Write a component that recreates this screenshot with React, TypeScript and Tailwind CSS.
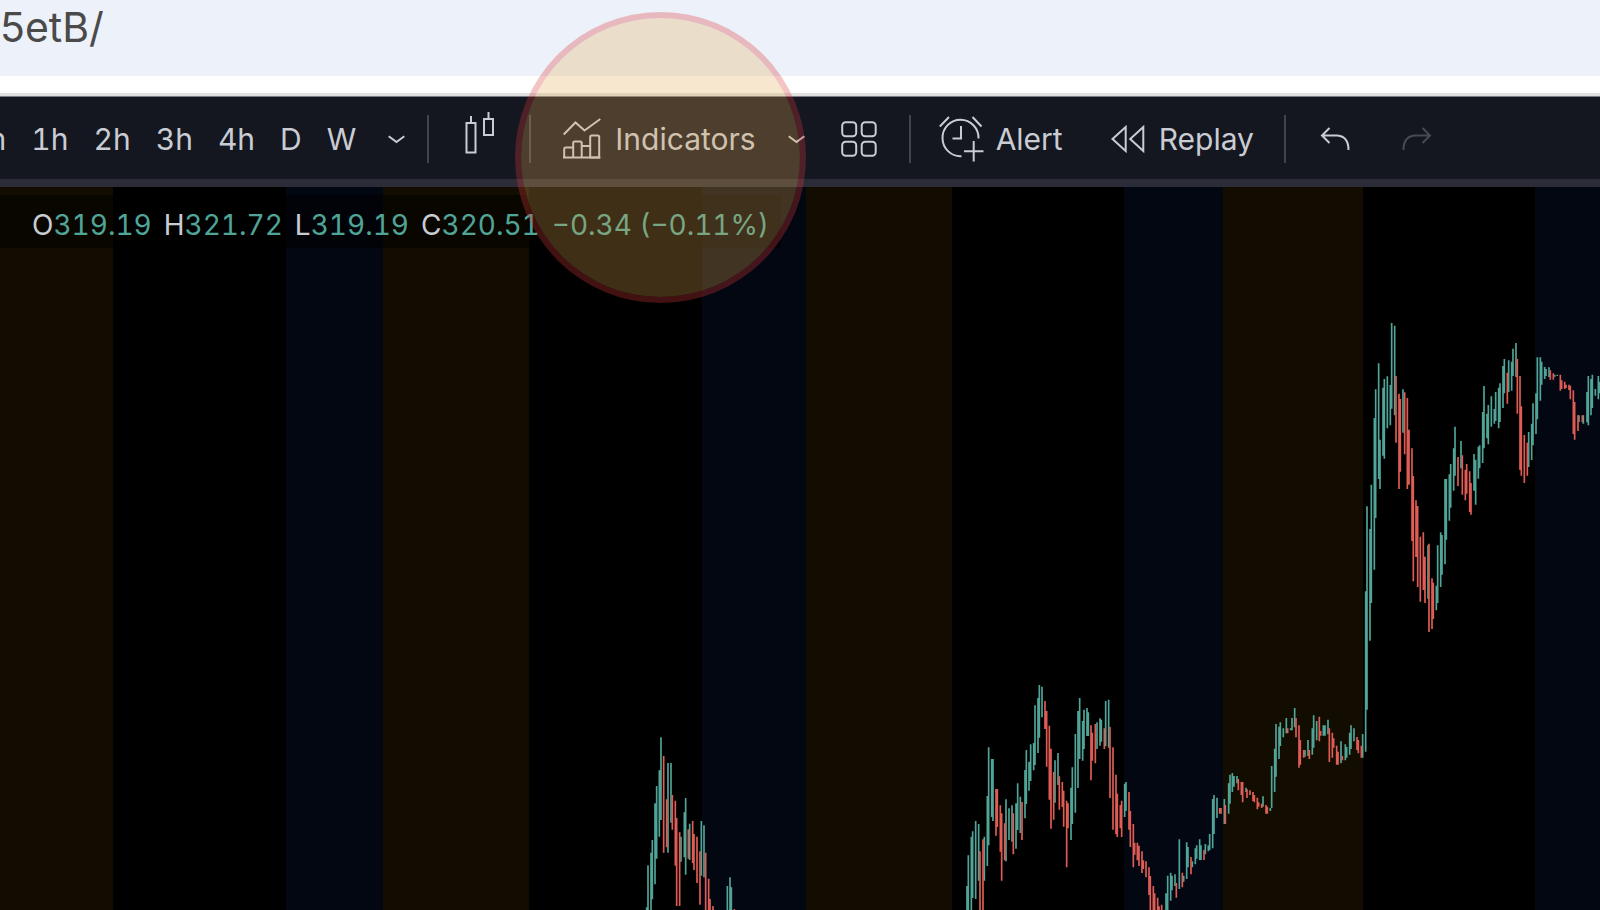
import type { ReactNode } from 'react';

type Stick = [x: number, top: number, bottom: number];

interface Segment {
	x: number;
	y: number;
	up: Stick[];
	down: Stick[];
}

const intervals = ['1h', '2h', '3h', '4h', 'D', 'W'];

const quote = [
	{ label: 'O', value: '319.19' },
	{ label: 'H', value: '321.72' },
	{ label: 'L', value: '319.19' },
	{ label: 'C', value: '320.51' },
];

// Trading sessions behind the candles
const sessions = [
	{ x: 0, width: 113, color: '#130c00' },
	{ x: 286, width: 97, color: '#030711' },
	{ x: 383, width: 146, color: '#130c00' },
	{ x: 702, width: 104, color: '#030711' },
	{ x: 806, width: 146, color: '#130c00' },
	{ x: 1124, width: 99, color: '#030711' },
	{ x: 1223, width: 140, color: '#130c00' },
	{ x: 1535, width: 65, color: '#030711' },
];

// Sticks are in thirds of a pixel, relative to the segment's origin
const segments: Segment[] = [
	{
		x: 630,
		y: 533,
		up: [[50, 562, 575], [54, 436, 575], [63, 398, 575], [67, 360, 538], [75, 250, 493], [80, 198, 416], [88, 151, 350], [93, 52, 300], [114, 129, 398], [123, 129, 308], [153, 350, 425], [163, 277, 412], [167, 234, 464], [179, 311, 420], [214, 303, 467], [222, 316, 472], [292, 498, 575], [300, 472, 575], [304, 502, 575]],
		down: [[101, 108, 398], [110, 238, 382], [127, 225, 329], [136, 242, 437], [140, 294, 558], [149, 337, 558], [175, 328, 416], [188, 303, 429], [192, 342, 450], [201, 350, 489], [210, 394, 554], [227, 398, 575], [236, 476, 575], [240, 537, 575], [249, 558, 575], [313, 567, 575]],
	},
	{
		x: 950,
		y: 483,
		up: [[51, 648, 725], [55, 556, 725], [64, 500, 725], [68, 484, 684], [77, 453, 687], [86, 462, 632], [103, 500, 632], [112, 378, 588], [116, 232, 526], [125, 267, 441], [129, 267, 453], [168, 388, 574], [177, 415, 510], [186, 406, 515], [198, 400, 536], [203, 340, 480], [211, 380, 489], [225, 300, 445], [229, 240, 402], [237, 275, 362], [242, 223, 333], [251, 219, 301], [255, 106, 285], [264, 84, 249], [268, 45, 203], [276, 50, 142], [315, 271, 398], [324, 249, 345]],
		down: [[90, 544, 725], [99, 508, 725], [138, 357, 497], [142, 357, 471], [151, 406, 545], [155, 430, 632], [164, 460, 571], [190, 430, 553], [216, 396, 510], [285, 93, 177], [290, 123, 290], [298, 167, 389], [303, 236, 476], [311, 306, 449], [328, 319, 419]],
	},
	{
		x: 1060,
		y: 493,
		up: [[33, 323, 480], [37, 262, 432], [46, 162, 398], [54, 93, 324], [59, 54, 237], [68, 123, 242], [72, 89, 207], [81, 84, 168], [85, 97, 168], [111, 127, 207], [120, 115, 197], [124, 119, 185], [137, 63, 199], [146, 59, 203], [194, 311, 411], [198, 306, 393]],
		down: [[7, 306, 381], [11, 332, 440], [20, 362, 562], [24, 370, 445], [93, 136, 301], [97, 158, 242], [106, 132, 250], [133, 145, 207], [150, 141, 354], [159, 202, 449], [168, 284, 463], [172, 341, 471], [181, 375, 445], [185, 362, 471], [207, 336, 449], [211, 393, 501], [220, 432, 562], [224, 488, 524], [232, 488, 541], [237, 497, 558], [246, 514, 579], [250, 541, 567], [258, 544, 592], [267, 562, 645], [271, 588, 695], [280, 618, 695], [284, 640, 695], [293, 653, 695], [297, 679, 695]],
	},
	{
		x: 1160,
		y: 503,
		up: [[18, 610, 665], [23, 557, 665], [32, 548, 632], [36, 557, 601], [45, 553, 588], [58, 448, 597], [71, 557, 575], [80, 457, 567], [84, 471, 532], [97, 514, 532], [106, 475, 523], [110, 466, 506], [119, 448, 510], [123, 466, 510], [136, 462, 493], [145, 466, 484], [149, 432, 480], [158, 327, 475], [162, 315, 432], [171, 323, 384], [193, 327, 402], [206, 280, 371], [210, 254, 341], [217, 249, 306], [222, 258, 290], [231, 258, 280], [258, 293, 306], [309, 319, 350], [331, 354, 363], [335, 228, 354], [344, 176, 306], [348, 102, 260], [357, 110, 207], [361, 97, 168], [370, 115, 142], [379, 84, 130], [392, 115, 121], [396, 84, 121], [404, 54, 112], [435, 180, 200], [444, 150, 198], [457, 115, 194], [461, 76, 173], [470, 93, 151], [490, 106, 137], [495, 106, 137], [504, 89, 133], [543, 154, 220], [556, 163, 211], [560, 171, 203], [569, 128, 194], [573, 106, 177], [582, 115, 154], [608, 132, 203]],
		down: [[5, 644, 665], [49, 579, 623], [67, 548, 592], [93, 501, 553], [132, 480, 510], [179, 354, 371], [183, 354, 371], [196, 345, 402], [235, 267, 301], [244, 276, 315], [248, 276, 337], [261, 298, 324], [270, 301, 315], [279, 306, 333], [283, 315, 337], [292, 323, 358], [296, 337, 350], [305, 341, 354], [318, 345, 371], [322, 350, 371], [383, 115, 130], [408, 84, 142], [417, 106, 233], [421, 150, 224], [431, 180, 203], [448, 180, 207], [478, 80, 154], [482, 123, 137], [508, 115, 216], [517, 128, 203], [521, 145, 173], [530, 167, 224], [534, 185, 224], [547, 198, 211], [591, 141, 180], [595, 150, 190], [604, 167, 203]],
	},
	{
		x: 1350,
		y: 113,
		up: [[47, 874, 1355], [51, 619, 1229], [60, 687, 1022], [64, 554, 909], [73, 354, 809], [77, 268, 654], [86, 190, 537], [90, 419, 567], [99, 263, 467], [103, 237, 476], [112, 229, 385], [121, 255, 376], [125, 69, 326], [134, 77, 346], [159, 268, 398], [234, 736, 896], [259, 857, 931], [263, 736, 909], [272, 697, 861], [276, 705, 824], [285, 537, 793], [289, 537, 719]],
		down: [[138, 228, 428], [147, 281, 567], [151, 297, 515], [164, 277, 463], [172, 294, 567], [177, 389, 554], [186, 445, 723], [190, 528, 844], [198, 601, 771], [203, 618, 861], [211, 710, 905], [220, 697, 870], [225, 770, 909], [237, 731, 996], [246, 835, 987], [250, 848, 957]],
	},
	{
		x: 1420,
		y: 133,
		up: [[88, 463, 602], [92, 432, 563], [101, 385, 512], [105, 320, 467], [123, 363, 445], [162, 402, 512], [167, 419, 554], [175, 380, 476], [179, 376, 445], [188, 276, 429], [192, 198, 385], [201, 281, 355], [205, 255, 373], [214, 229, 320], [223, 267, 311], [227, 216, 303], [236, 203, 325], [240, 190, 306], [249, 138, 264], [253, 117, 220], [266, 121, 216], [275, 125, 212], [279, 86, 168], [288, 69, 171], [326, 336, 441], [335, 311, 420], [339, 250, 376], [348, 220, 342], [352, 112, 298], [361, 112, 242], [365, 125, 194], [374, 141, 177], [378, 147, 168], [387, 142, 171], [404, 164, 170], [412, 164, 168], [477, 286, 306], [490, 286, 311], [501, 216, 307], [505, 168, 316], [513, 177, 286], [517, 164, 264], [526, 207, 227], [535, 168, 238], [539, 185, 220]],
		down: [[114, 411, 498], [127, 406, 524], [136, 450, 541], [140, 432, 521], [149, 454, 576], [153, 489, 584], [262, 158, 251], [292, 117, 281], [300, 168, 450], [304, 259, 467], [313, 345, 489], [322, 368, 467], [391, 151, 179], [400, 160, 179], [421, 164, 212], [425, 181, 207], [434, 185, 207], [438, 194, 204], [447, 194, 210], [451, 197, 238], [460, 211, 342], [464, 246, 359], [474, 286, 333], [487, 286, 307]],
	},
];

const toPath = (sticks: Stick[]) =>
	sticks.map(([x, top, bottom]) => `M${x} ${top}V${bottom}`).join('');

const Chart = () => (
	<svg
		viewBox="0 0 1600 723"
		className="block w-full bg-black"
		role="img"
		aria-label="Price chart"
	>
		{sessions.map((session) => (
			<rect
				key={session.x}
				x={session.x}
				width={session.width}
				height="723"
				fill={session.color}
			/>
		))}
		{segments.map((segment) => (
			<g
				key={segment.x}
				transform={`translate(${segment.x} ${segment.y}) scale(${1 / 3})`}
				strokeWidth="5"
			>
				<path d={toPath(segment.up)} stroke="#50a598" />
				<path d={toPath(segment.down)} stroke="#e05d55" />
			</g>
		))}
	</svg>
);

const ChevronIcon = () => (
	<svg width="17" height="9" viewBox="0 0 17 9" fill="none" stroke="currentColor" strokeWidth="2">
		<path d="M.7 1.2 8.5 7l7.8-5.8" />
	</svg>
);

const CandlesIcon = () => (
	<svg width="30" height="42" viewBox="0 0 30 42" fill="none" stroke="currentColor" strokeWidth="2">
		<path d="M6 4v7M1.5 11h9v29.5h-9zM23.5 0v7M19 7h9v16h-9z" />
	</svg>
);

const IndicatorsIcon = () => (
	<svg width="38" height="42" viewBox="0 0 38 42" fill="none" stroke="currentColor" strokeWidth="2">
		<path d="M.7 16.5 12.5 4.5l9 8L37.3 1M1.2 39.5v-8.5q0-1.5 1.5-1.5h7.5v-4.5q0-1.5 1.5-1.5h5.5q1.5 0 1.5 1.5v14.5M10.2 29.5v10M18.7 28h8.5M27.2 39.5v-20.5q0-1.5 1.5-1.5h6q1.5 0 1.5 1.5v20.5z" />
		<path d="M0 39.5h37.3" />
	</svg>
);

const LayoutIcon = () => (
	<svg width="36" height="36" viewBox="0 0 36 36" fill="none" stroke="currentColor" strokeWidth="2">
		<rect x="1.2" y="1.2" width="14" height="14" rx="3.5" />
		<rect x="20.7" y="1.2" width="14" height="14" rx="3.5" />
		<rect x="1.2" y="20.7" width="14" height="14" rx="3.5" />
		<rect x="20.7" y="20.7" width="14" height="14" rx="3.5" />
	</svg>
);

const AlertIcon = () => (
	<svg width="45" height="46" viewBox="0 0 45 46" fill="none" stroke="currentColor" strokeWidth="2">
		<path d="M39.5 22.5A18 18.3 0 1 0 22.5 40.2M22 10v12.5h-8.5M.8 10.5 10 1M33.5 1l9 9.5M34.7 25v20.5M25 35.3h19.5" />
	</svg>
);

const ReplayIcon = () => (
	<svg width="34" height="28" viewBox="0 0 34 28" fill="none" stroke="currentColor" strokeWidth="2">
		<path d="M14.7 2v24L1.5 14zM32.3 2v24L19.2 14z" />
	</svg>
);

const UndoIcon = () => (
	<svg width="30" height="24" viewBox="0 0 30 24" fill="none" stroke="currentColor" strokeWidth="2">
		<path d="M9.5 1 2 8.5l7.5 7.5M2 8.5h15.5q11 1 11 14.5" />
	</svg>
);

const Divider = ({ className }: { className: string }) => (
	<div className={`h-12 w-0.5 shrink-0 bg-[#41434d] ${className}`} />
);

const ToolButton = ({
	label,
	className = '',
	children,
}: {
	label: string;
	className?: string;
	children: ReactNode;
}) => (
	<button
		type="button"
		aria-label={label}
		className={`flex shrink-0 items-center ${className}`}
	>
		{children}
	</button>
);

const Toolbar = () => (
	<nav className="flex h-[83px] items-center overflow-hidden border-t border-[#7b7d80] bg-[#141620] pt-0.5 text-[30px] leading-9 text-[#c9ccd3] tabular-nums">
		<div className="flex shrink-0 items-center gap-[25px]">
			<button type="button" className="-ml-5">
				m
			</button>
			{intervals.map((interval) => (
				<button key={interval} type="button">
					{interval}
				</button>
			))}
		</div>
		<ToolButton label="More intervals" className="ml-8">
			<ChevronIcon />
		</ToolButton>
		<Divider className="ml-[22px]" />
		<ToolButton label="Candles" className="ml-9 pb-3">
			<CandlesIcon />
		</ToolButton>
		<Divider className="ml-[34px]" />
		<ToolButton label="Indicators" className="ml-8 gap-[14px]">
			<IndicatorsIcon />
			<span>Indicators</span>
		</ToolButton>
		<ToolButton label="Favorite indicators" className="ml-8">
			<ChevronIcon />
		</ToolButton>
		<ToolButton label="Layout" className="ml-9">
			<LayoutIcon />
		</ToolButton>
		<Divider className="ml-8" />
		<ToolButton label="Alert" className="ml-7 gap-3">
			<AlertIcon />
			<span>Alert</span>
		</ToolButton>
		<ToolButton label="Replay" className="ml-12 gap-[14px]">
			<ReplayIcon />
			<span>Replay</span>
		</ToolButton>
		<Divider className="ml-[30px]" />
		<ToolButton label="Undo" className="ml-[34px]">
			<UndoIcon />
		</ToolButton>
		<ToolButton label="Redo" className="ml-13 -scale-x-100 text-[#474a53]">
			<UndoIcon />
		</ToolButton>
	</nav>
);

const Legend = () => (
	<div className="absolute top-2 left-0 flex h-[53px] items-center gap-3 bg-black/50 pt-1.5 pr-3 pl-8 text-[28px] text-[#50a598] tabular-nums">
		{quote.map(({ label, value }) => (
			<span key={label}>
				<span className="text-[#c9ccd3]">{label}</span>
				{value}
			</span>
		))}
		<span>−0.34 (−0.11%)</span>
	</div>
);

export default function App() {
	return (
		<main className="relative min-h-screen overflow-hidden bg-black font-['Inter',sans-serif]">
			<header className="h-[76px] bg-[#edf1f9] pt-[3px] text-[41px] leading-12 text-[#4a4a4a]">
				5etB/
			</header>
			<div className="h-5 border-b-3 border-[#dfe1e1] bg-white" />
			<Toolbar />
			<div className="h-2 bg-[#2b2c38]" />
			<section className="relative">
				<Chart />
				<Legend />
			</section>
			{/* Highlight over the Indicators button */}
			<div className="pointer-events-none absolute top-3 left-[515px] size-[291px] rounded-full border-6 border-[#dc3737]/30 bg-[#e4a850]/28 bg-clip-padding" />
		</main>
	);
}
